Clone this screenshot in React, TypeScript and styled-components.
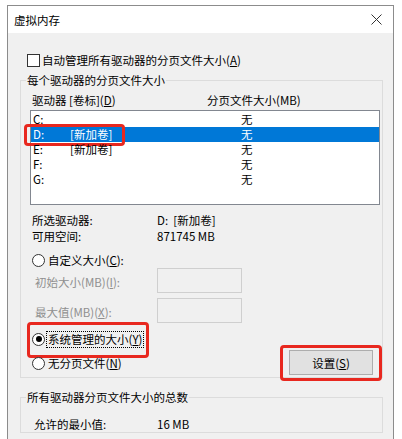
import React from 'react';
import styled, { createGlobalStyle } from 'styled-components';

const Global = createGlobalStyle`
  html, body { margin: 0; padding: 0; background: #ffffff; }
  body {
    font-family: "Noto Sans CJK SC", "Noto Sans", sans-serif;
    font-size: 11.5px;
    color: #000;
  }
  #root { width: 402px; height: 439px; overflow: hidden; }
  * { box-sizing: border-box; }
`;

const Stage = styled.div`
  padding: 5px 0 0 7px;
  height: 439px;
  overflow: hidden;
`;

const Window = styled.div`
  width: 387px;
  height: 450px;
  border: 1px solid #8c8c8c;
  background: #f0f0f0;
  display: flex;
  flex-direction: column;
`;

const TitleBar = styled.div`
  height: 27px;
  flex: none;
  background: #fff;
  display: flex;
  align-items: center;
  justify-content: space-between;
  padding-left: 6px;
  line-height: 16px;
`;

const CloseIcon = styled.svg`
  width: 11px;
  height: 11px;
  margin-right: 11px;
`;

const CheckRow = styled.div`
  margin: 20px 0 0 19px;
  height: 14px;
  display: flex;
  align-items: center;
  line-height: 14px;
`;

const CheckBox = styled.span`
  width: 13px;
  height: 13px;
  border: 1px solid #333;
  background: #fff;
  flex: none;
`;

const CheckLabel = styled.span`
  margin-left: 2px;
`;

const Group = styled.fieldset<{ $top: number }>`
  margin: ${p => p.$top}px 0 0 12px;
  width: 363px;
  border: 1px solid #dcdcdc;
  padding: 0;
  min-width: 0;
`;

const Legend = styled.legend`
  margin-left: 5px;
  padding: 0 1px;
  line-height: 16px;
  height: 16px;
`;

const Header = styled.div`
  margin-top: 4px;
  padding-left: 11px;
  height: 16px;
  line-height: 16px;
  display: grid;
  grid-template-columns: 175px 1fr;
`;

const List = styled.div`
  margin: 2px 0 0 9px;
  width: 350px;
  height: 95px;
  border: 1px solid #828790;
  background: #fff;
  padding-top: 1px;
`;

const Row = styled.div<{ $selected?: boolean }>`
  position: relative;
  height: 15px;
  line-height: 15px;
  display: grid;
  grid-template-columns: 37px 171px 1fr;
  padding-left: 2px;
  background: ${p => (p.$selected ? '#0078d7' : 'transparent')};
  color: ${p => (p.$selected ? '#fff' : '#000')};
`;

const Mark = styled.span<{ $l: number; $t: number; $w: number; $h: number }>`
  position: absolute;
  left: ${p => p.$l}px;
  top: ${p => p.$t}px;
  width: ${p => p.$w}px;
  height: ${p => p.$h}px;
  border: 3px solid #e8281f;
  border-radius: 4px;
  pointer-events: none;
`;

const InfoBlock = styled.div<{ $top: number; $pad: number }>`
  margin-top: ${p => p.$top}px;
  padding-left: ${p => p.$pad}px;
`;

const InfoRow = styled.div<{ $col: number }>`
  height: 16px;
  line-height: 16px;
  display: grid;
  grid-template-columns: ${p => p.$col}px 1fr;
`;

const RadioRow = styled.div<{ $top?: number }>`
  position: relative;
  margin-top: ${p => p.$top ?? 0}px;
  height: 16px;
  display: flex;
  align-items: center;
  line-height: 16px;
`;

const Radio = styled.span<{ $checked?: boolean }>`
  width: 13px;
  height: 13px;
  border: 1px solid #333;
  border-radius: 50%;
  background: #fff;
  flex: none;
  display: flex;
  align-items: center;
  justify-content: center;
  &::after {
    content: '';
    width: 6px;
    height: 6px;
    border-radius: 50%;
    background: ${p => (p.$checked ? '#000' : 'transparent')};
  }
`;

const RadioLabel = styled.span<{ $focus?: boolean }>`
  margin-left: ${p => (p.$focus ? 1 : 3)}px;
  padding: 0 ${p => (p.$focus ? 1 : 0)}px;
  line-height: 15px;
  border: ${p => (p.$focus ? '1px dotted #000' : 'none')};
`;

const FieldRow = styled.div<{ $top: number }>`
  margin-top: ${p => p.$top}px;
  padding-left: 14px;
  height: 25px;
  display: grid;
  grid-template-columns: 122px 85px;
  align-items: center;
`;

const FieldLabel = styled.span`
  color: #8f8f8f;
  padding-top: 3px;
  line-height: 16px;
`;

const TextBox = styled.div`
  width: 85px;
  height: 25px;
  border: 1px solid #cfcfcf;
  background: #f0f0f0;
`;

const BottomSection = styled.div`
  margin-top: 8px;
  padding-bottom: 2px;
  display: flex;
  justify-content: space-between;
  align-items: flex-end;
`;

const RadioColumn = styled.div`
  padding: 0 0 4px 11px;
  display: flex;
  flex-direction: column;
  gap: 8px;
`;

const ButtonWrap = styled.div`
  position: relative;
  margin-right: 9px;
`;

const Button = styled.div`
  width: 84px;
  height: 25px;
  border: 1px solid #adadad;
  background: #e1e1e1;
  display: flex;
  align-items: center;
  justify-content: center;
  line-height: 16px;
`;

const U = styled.span`
  text-decoration: underline;
`;

const drives = [
  { d: 'C:', l: '', s: '无' },
  { d: 'D:', l: '[新加卷]', s: '无', sel: true },
  { d: 'E:', l: '[新加卷]', s: '无' },
  { d: 'F:', l: '', s: '无' },
  { d: 'G:', l: '', s: '无' },
];

export default function App() {
  return (
    <>
      <Global />
      <Stage>
        <Window>
          <TitleBar>
            <span>虚拟内存</span>
            <CloseIcon viewBox="0 0 11 11">
              <path d="M0.5 0.5 L10.5 10.5 M10.5 0.5 L0.5 10.5" stroke="#333" strokeWidth="1" fill="none" />
            </CloseIcon>
          </TitleBar>

          <CheckRow>
            <CheckBox />
            <CheckLabel>
              自动管理所有驱动器的分页文件大小(<U>A</U>)
            </CheckLabel>
          </CheckRow>

          <Group $top={5}>
            <Legend>每个驱动器的分页文件大小</Legend>
            <Header>
              <span>
                驱动器 [卷标](<U>D</U>)
              </span>
              <span>分页文件大小(MB)</span>
            </Header>
            <List>
              {drives.map(r => (
                <Row key={r.d} $selected={r.sel}>
                  <span>{r.d}</span>
                  <span>{r.l}</span>
                  <span>{r.s}</span>
                  {r.sel && <Mark $l={-7} $t={-3} $w={101} $h={22} />}
                </Row>
              ))}
            </List>

            <InfoBlock $top={7} $pad={11}>
              <InfoRow $col={125}>
                <span>所选驱动器:</span>
                <span>D:&nbsp;&nbsp;[新加卷]</span>
              </InfoRow>
              <InfoRow $col={125}>
                <span>可用空间:</span>
                <span>871745 MB</span>
              </InfoRow>
            </InfoBlock>

            <InfoBlock $top={8} $pad={11}>
              <RadioRow>
                <Radio />
                <RadioLabel>
                  自定义大小(<U>C</U>):
                </RadioLabel>
              </RadioRow>
            </InfoBlock>

            <FieldRow $top={0}>
              <FieldLabel>
                初始大小(MB)(<U>I</U>):
              </FieldLabel>
              <TextBox />
            </FieldRow>
            <FieldRow $top={5}>
              <FieldLabel>
                最大值(MB)(<U>X</U>):
              </FieldLabel>
              <TextBox />
            </FieldRow>

            <BottomSection>
              <RadioColumn>
                <RadioRow>
                  <Radio $checked />
                  <RadioLabel $focus>
                    系统管理的大小(<U>Y</U>)
                  </RadioLabel>
                  <Mark $l={-5} $t={-9} $w={122} $h={36} />
                </RadioRow>
                <RadioRow>
                  <Radio />
                  <RadioLabel>
                    无分页文件(<U>N</U>)
                  </RadioLabel>
                </RadioRow>
              </RadioColumn>
              <ButtonWrap>
                <Button>
                  设置(<U>S</U>)
                </Button>
                <Mark $l={-9} $t={-5} $w={102} $h={36} />
              </ButtonWrap>
            </BottomSection>
          </Group>

          <Group $top={11}>
            <Legend>所有驱动器分页文件大小的总数</Legend>
            <InfoBlock $top={11} $pad={13}>
              <InfoRow $col={123}>
                <span>允许的最小值:</span>
                <span>16 MB</span>
              </InfoRow>
            </InfoBlock>
          </Group>
        </Window>
      </Stage>
    </>
  );
}
